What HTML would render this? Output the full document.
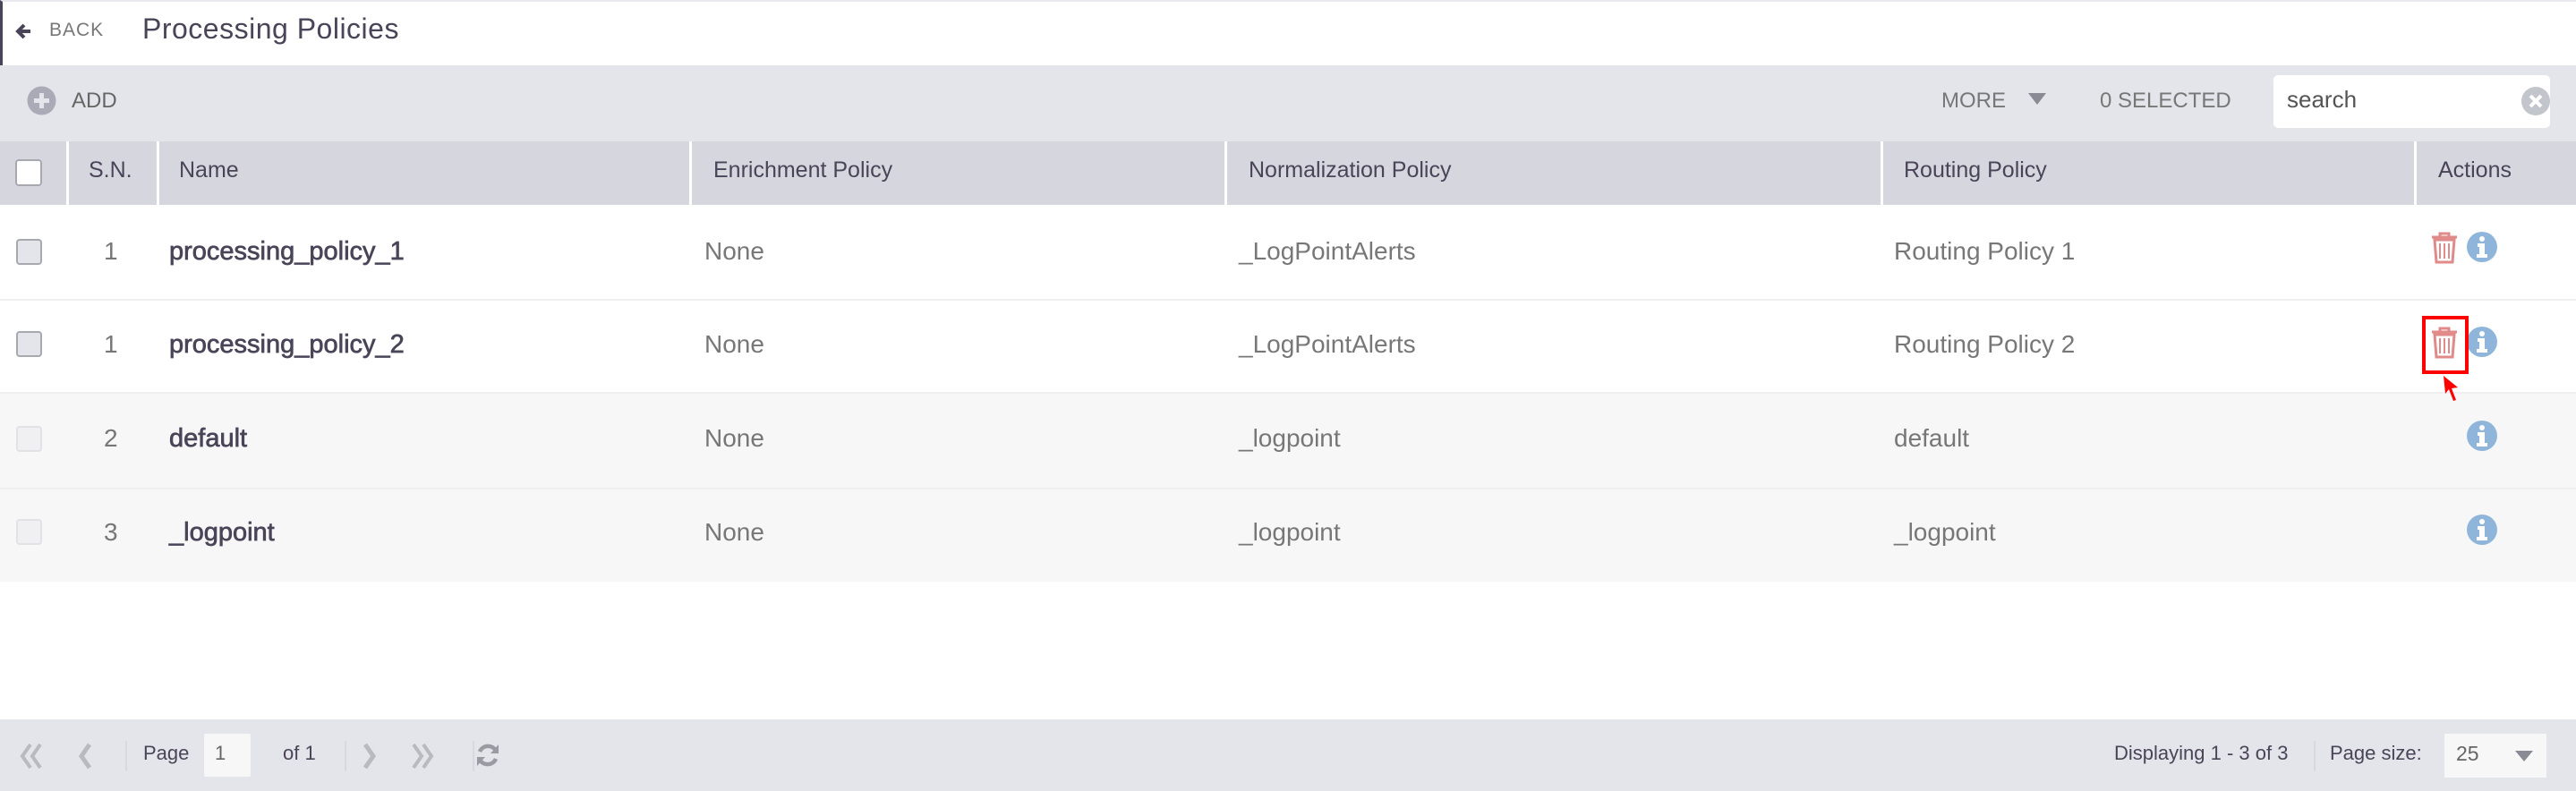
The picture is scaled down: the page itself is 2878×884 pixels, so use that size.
<!DOCTYPE html>
<html><head><meta charset="utf-8"><style>
*{box-sizing:border-box;margin:0;padding:0}
body{width:2878px;height:884px;background:#fff;font-family:"Liberation Sans",sans-serif;position:relative;overflow:hidden;color:#4a4458}
.abs{position:absolute}
.top{left:0;top:0;width:2878px;height:73px;background:#fff;border-left:3px solid #4a4458;border-top:2px solid #e8e8ee}
.tb{left:0;top:73px;width:2878px;height:85px;background:#e4e5ea}
.hd{left:0;top:158px;width:2878px;height:71px;background:#d6d6de}
.sep{top:158px;width:3px;height:71px;background:#fff}
.ht{top:176px;font-size:25px;color:#4a4458}
.row{left:0;width:2878px;border-bottom:2px solid #f0f0f3}
.cb{width:29px;height:29px;border:2px solid #a8a8b0;border-radius:4px;background:#e4e5ea}
.t{font-size:28px;color:#777}
.nm{font-size:29px;color:#4a4458;font-weight:normal;-webkit-text-stroke:0.7px #4a4458}
.ft{left:0;top:804px;width:2878px;height:80px;background:#e4e5ea}
.fx{font-size:22px;color:#4a4458}
.vs{width:2px;height:34px;background:#d8d9de;top:828px}
</style></head><body>
<div class="abs top"></div>
<svg class="abs" style="left:16px;top:25px" width="20" height="20" viewBox="0 0 20 20"><path d="M11 3 L4 10 L11 17 M4 10 H18" stroke="#4a4458" stroke-width="4" fill="none"/></svg>
<div class="abs" style="left:55px;top:22px;font-size:21px;color:#777;letter-spacing:1px">BACK</div>
<div class="abs" style="left:159px;top:14px;font-size:32px;color:#4a4458;letter-spacing:0.5px">Processing Policies</div>

<div class="abs tb"></div>
<svg class="abs" style="left:30px;top:96px" width="33" height="33" viewBox="0 0 33 33"><circle cx="16.5" cy="16.5" r="16" fill="#a9acb6"/><path d="M16.5 8v17M8 16.5h17" stroke="#e4e5ea" stroke-width="5"/></svg>
<div class="abs" style="left:80px;top:99px;font-size:24px;color:#666">ADD</div>
<div class="abs" style="left:2169px;top:99px;font-size:24px;color:#777">MORE</div>
<svg class="abs" style="left:2266px;top:104px" width="20" height="14"><path d="M0 0H20L10 13Z" fill="#8a8a94"/></svg>
<div class="abs" style="left:2346px;top:99px;font-size:24px;color:#777">0 SELECTED</div>
<div class="abs" style="left:2540px;top:84px;width:309px;height:59px;background:#fff;border-radius:5px"></div>
<div class="abs" style="left:2555px;top:96px;font-size:26px;color:#555">search</div>
<svg class="abs" style="left:2816px;top:96px" width="34" height="34" viewBox="0 0 34 34"><circle cx="17" cy="17" r="16" fill="#c3c5cc"/><path d="M11 11L23 23M23 11L11 23" stroke="#fff" stroke-width="4"/></svg>

<div class="abs hd"></div>
<div class="abs sep" style="left:74px"></div>
<div class="abs sep" style="left:175px"></div>
<div class="abs sep" style="left:770px"></div>
<div class="abs sep" style="left:1368px"></div>
<div class="abs sep" style="left:2101px"></div>
<div class="abs sep" style="left:2697px"></div>
<div class="abs" style="left:17px;top:178px;width:30px;height:30px;background:#fff;border:2px solid #a8a8b0;border-radius:4px"></div>
<div class="abs ht" style="left:99px">S.N.</div>
<div class="abs ht" style="left:200px">Name</div>
<div class="abs ht" style="left:797px">Enrichment Policy</div>
<div class="abs ht" style="left:1395px">Normalization Policy</div>
<div class="abs ht" style="left:2127px">Routing Policy</div>
<div class="abs ht" style="left:2724px">Actions</div>

<div class="abs row" style="top:229px;height:107px;background:#fff"></div>
<div class="abs row" style="top:336px;height:104px;background:#fff"></div>
<div class="abs row" style="top:440px;height:107px;background:#f7f7f8"></div>
<div class="abs row" style="top:547px;height:103px;background:#f7f7f8;border-bottom:none"></div>

<div class="abs cb" style="left:18px;top:267px"></div>
<div class="abs t" style="left:116px;top:265px">1</div>
<div class="abs nm" style="left:189px;top:265px">processing_policy_1</div>
<div class="abs t" style="left:787px;top:265px">None</div>
<div class="abs t" style="left:1384px;top:265px">_LogPointAlerts</div>
<div class="abs t" style="left:2116px;top:265px">Routing Policy 1</div>

<div class="abs cb" style="left:18px;top:370px"></div>
<div class="abs t" style="left:116px;top:369px">1</div>
<div class="abs nm" style="left:189px;top:369px">processing_policy_2</div>
<div class="abs t" style="left:787px;top:369px">None</div>
<div class="abs t" style="left:1384px;top:369px">_LogPointAlerts</div>
<div class="abs t" style="left:2116px;top:369px">Routing Policy 2</div>

<div class="abs cb" style="left:18px;top:476px;background:#f0f0f2;border-color:#e2e2e6"></div>
<div class="abs t" style="left:116px;top:474px">2</div>
<div class="abs nm" style="left:189px;top:474px">default</div>
<div class="abs t" style="left:787px;top:474px">None</div>
<div class="abs t" style="left:1384px;top:474px">_logpoint</div>
<div class="abs t" style="left:2116px;top:474px">default</div>

<div class="abs cb" style="left:18px;top:580px;background:#f0f0f2;border-color:#e2e2e6"></div>
<div class="abs t" style="left:116px;top:579px">3</div>
<div class="abs nm" style="left:189px;top:579px">_logpoint</div>
<div class="abs t" style="left:787px;top:579px">None</div>
<div class="abs t" style="left:1384px;top:579px">_logpoint</div>
<div class="abs t" style="left:2116px;top:579px">_logpoint</div>

<svg class="abs" style="left:2715px;top:259px" width="32" height="36" viewBox="0 0 32 36"><path d="M11 5V2h10v3M2 6h28M5 9h22l-2 25H7Z" stroke="#e08a8a" stroke-width="3" fill="none"/><path d="M11 13v17M16 13v17M21 13v17" stroke="#e08a8a" stroke-width="2"/></svg>
<svg class="abs" style="left:2755px;top:258px" width="36" height="36" viewBox="0 0 36 36"><circle cx="18" cy="18" r="17" fill="#8fb6da"/><circle cx="18" cy="9" r="3" fill="#fff"/><path d="M13 14h8v12h3v4H12v-4h3v-8h-2Z" fill="#fff"/></svg>

<svg class="abs" style="left:2715px;top:365px" width="32" height="36" viewBox="0 0 32 36"><path d="M11 5V2h10v3M2 6h28M5 9h22l-2 25H7Z" stroke="#e08a8a" stroke-width="3" fill="none"/><path d="M11 13v17M16 13v17M21 13v17" stroke="#e08a8a" stroke-width="2"/></svg>
<svg class="abs" style="left:2755px;top:364px" width="36" height="36" viewBox="0 0 36 36"><circle cx="18" cy="18" r="17" fill="#8fb6da"/><circle cx="18" cy="9" r="3" fill="#fff"/><path d="M13 14h8v12h3v4H12v-4h3v-8h-2Z" fill="#fff"/></svg>
<div class="abs" style="left:2706px;top:353px;width:52px;height:65px;border:4px solid #f00"></div>
<svg class="abs" style="left:2726px;top:418px" width="26" height="34" viewBox="0 0 26 34"><path d="M4 2L6 22L10 17L15 30L18 29L13 16L20 15Z" fill="#f00"/></svg>

<svg class="abs" style="left:2755px;top:469px" width="36" height="36" viewBox="0 0 36 36"><circle cx="18" cy="18" r="17" fill="#8fb6da"/><circle cx="18" cy="9" r="3" fill="#fff"/><path d="M13 14h8v12h3v4H12v-4h3v-8h-2Z" fill="#fff"/></svg>
<svg class="abs" style="left:2755px;top:574px" width="36" height="36" viewBox="0 0 36 36"><circle cx="18" cy="18" r="17" fill="#8fb6da"/><circle cx="18" cy="9" r="3" fill="#fff"/><path d="M13 14h8v12h3v4H12v-4h3v-8h-2Z" fill="#fff"/></svg>

<div class="abs ft"></div>
<svg class="abs" style="left:20px;top:830px" width="32" height="30"><path d="M14 2L5 15L14 28M25 2L16 15L25 28" stroke="#b9bac0" stroke-width="4" fill="none"/></svg>
<svg class="abs" style="left:86px;top:830px" width="20" height="30"><path d="M14 2L5 15L14 28" stroke="#b9bac0" stroke-width="5" fill="none"/></svg>
<div class="abs vs" style="left:140px"></div>
<div class="abs fx" style="left:160px;top:829px">Page</div>
<div class="abs" style="left:228px;top:820px;width:52px;height:48px;background:#f7f7f8;border-radius:2px"></div>
<div class="abs fx" style="left:240px;top:829px;color:#666">1</div>
<div class="abs fx" style="left:316px;top:829px">of 1</div>
<div class="abs vs" style="left:385px"></div>
<svg class="abs" style="left:402px;top:830px" width="20" height="30"><path d="M6 2L15 15L6 28" stroke="#b9bac0" stroke-width="5" fill="none"/></svg>
<svg class="abs" style="left:455px;top:830px" width="32" height="30"><path d="M7 2L16 15L7 28M18 2L27 15L18 28" stroke="#b9bac0" stroke-width="4" fill="none"/></svg>
<div class="abs vs" style="left:528px"></div>
<svg class="abs" style="left:530px;top:828px" width="30" height="32" viewBox="0 0 30 32"><path d="M24 11A10 10 0 0 0 6 12M6 21A10 10 0 0 0 24 20" stroke="#9a9ba2" stroke-width="4.5" fill="none"/><path d="M27 4V14H18Z M3 28V18H12Z" fill="#9a9ba2"/></svg>
<div class="abs fx" style="left:2362px;top:829px">Displaying 1 - 3 of 3</div>
<div class="abs vs" style="left:2585px"></div>
<div class="abs fx" style="left:2603px;top:829px">Page size:</div>
<div class="abs" style="left:2731px;top:820px;width:114px;height:49px;background:#f7f7f8"></div>
<div class="abs fx" style="left:2744px;top:829px;color:#666;font-size:23px">25</div>
<svg class="abs" style="left:2810px;top:839px" width="20" height="13"><path d="M0 0H20L10 12Z" fill="#8a8a94"/></svg>
</body></html>
